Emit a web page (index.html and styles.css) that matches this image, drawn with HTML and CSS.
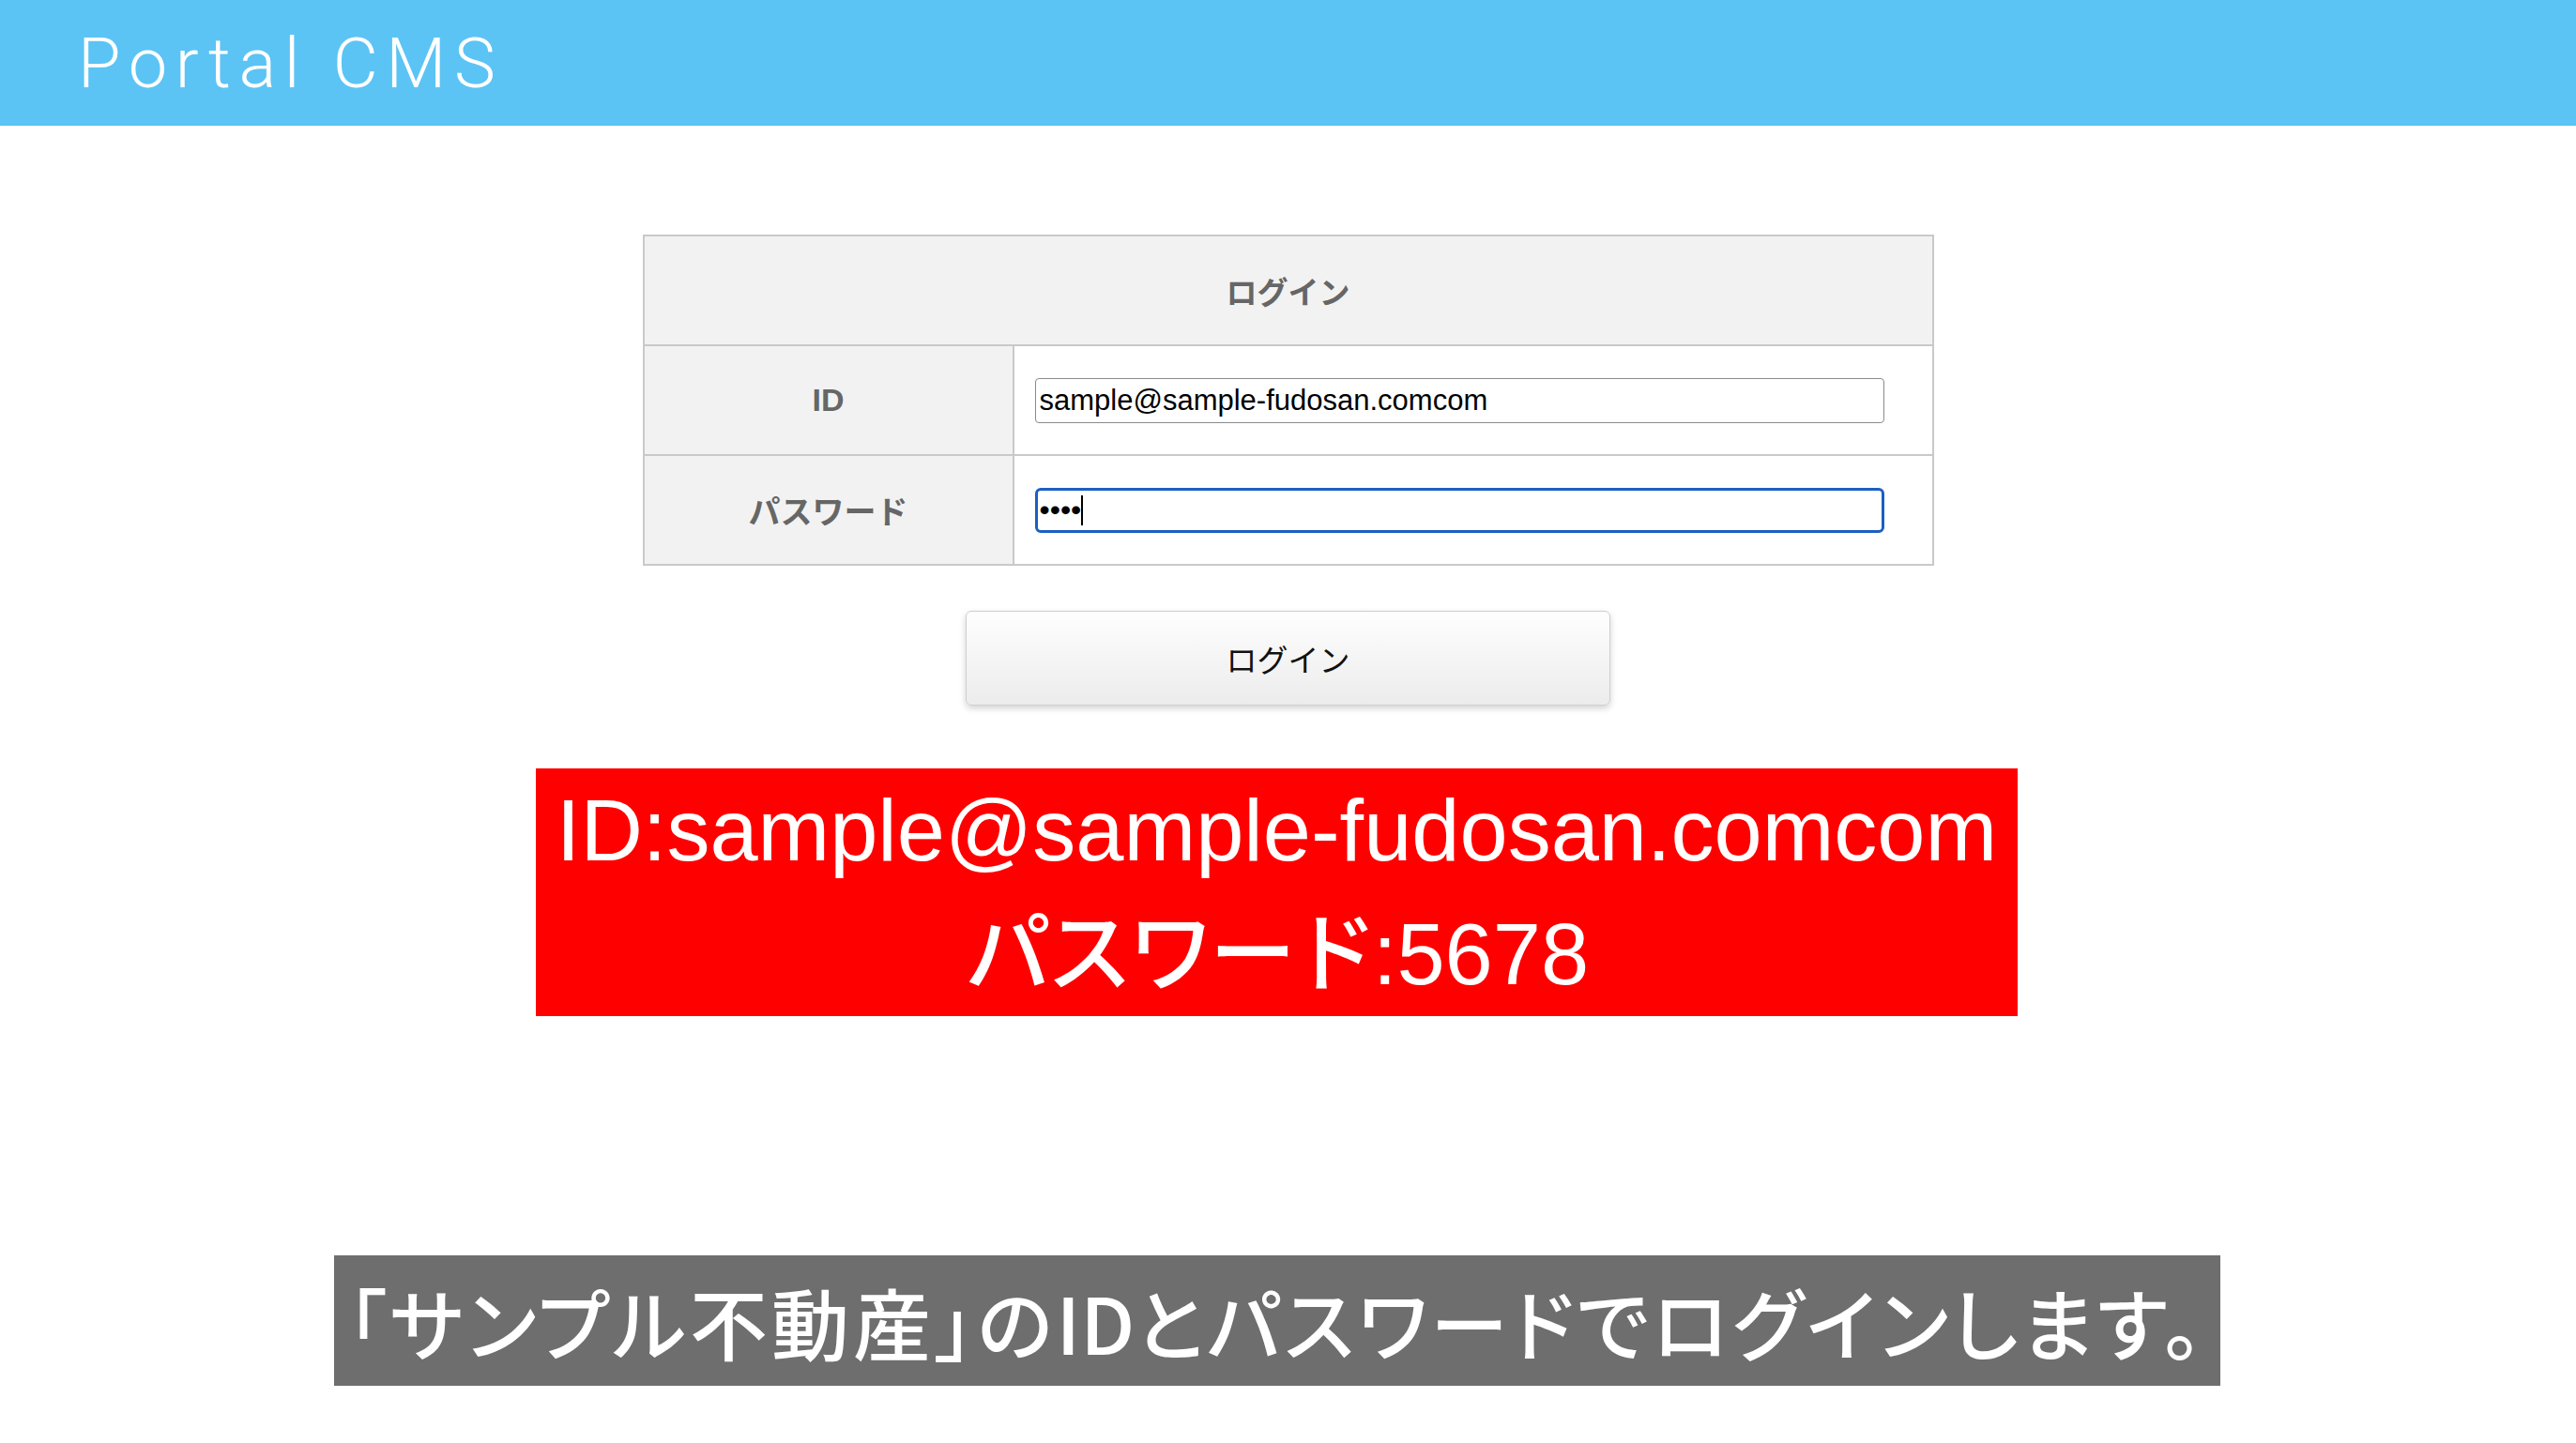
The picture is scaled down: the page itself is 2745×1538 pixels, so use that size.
FILE: index.html
```html
<!DOCTYPE html>
<html lang="ja">
<head>
  <meta charset="UTF-8">
  <meta name="viewport" content="width=device-width, initial-scale=1.0">
  <title>Portal CMS</title>
  <link rel="stylesheet" href="styles.css">
</head>
<body>
  <header class="site-header">
    <h1>Portal CMS</h1>
  </header>
  <main class="login">
    <form class="login-form" onsubmit="return false;">
      <table class="login-table">
        <colgroup>
          <col class="col-label">
          <col class="col-field">
        </colgroup>
        <tr>
          <th colspan="2" class="login-title">ログイン</th>
        </tr>
        <tr>
          <th class="label">ID</th>
          <td class="field"><input type="text" class="text-input" value="sample@sample-fudosan.comcom"></td>
        </tr>
        <tr>
          <th class="label">パスワード</th>
          <td class="field">
            <div class="text-input is-focused">
              <span class="dots">••••</span><span class="caret"></span>
            </div>
          </td>
        </tr>
      </table>
      <div class="login-actions">
        <button type="submit" class="login-button">ログイン</button>
      </div>
    </form>
  </main>
  <section class="notes">
    <div class="note-red">
      <p>ID:sample@sample-fudosan.comcom</p>
      <p><span class="kana">パスワード</span>:5678</p>
    </div>
    <div class="note-caption">
      <p>「サンプル不動産」の<span class="latin">ID</span>とパスワードでログインします。</p>
    </div>
  </section>
</body>
</html>
```

FILE: styles.css
```css
body {
  font-family: "Liberation Sans", "Noto Sans CJK JP", sans-serif;
  margin: 0;
  padding: 0;
  background-color: #ffffff;
  color: #111;
}
.site-header {
  background-color: #5bc4f4;
  height: 134px;
  display: flex;
  align-items: center;
  padding-left: 83px;
}
.site-header h1 {
  margin: 0;
  font-family: Roboto, "Liberation Sans", sans-serif;
  font-weight: 300;
  font-size: 74px;
  letter-spacing: 8.6px;
  color: #ffffff;
}
.login {
  display: flex;
  justify-content: center;
  padding-top: 116px;
}
.login-form {
  display: flex;
  flex-direction: column;
  align-items: center;
}
.login-table {
  width: 1376px;
  border-collapse: collapse;
  table-layout: fixed;
  border: 2px solid #c9c9c9;
}
.col-label {
  width: 394px;
}
.login-table th,
.login-table td {
  border: 2px solid #c9c9c9;
  height: 115px;
  padding: 0;
}
.login-title {
  background-color: #f2f2f2;
  color: #666;
  font-size: 33px;
  font-weight: 700;
}
.label {
  background-color: #f2f2f2;
  color: #666;
  font-size: 34px;
  font-weight: 700;
}
.field {
  background-color: #ffffff;
  padding-left: 22px !important;
}
.text-input {
  box-sizing: border-box;
  width: 905px;
  height: 48px;
  padding: 0 4px;
  font-family: "Liberation Sans", sans-serif;
  font-size: 31px;
  color: #000;
  border: 1.5px solid #8a8a8a;
  border-radius: 4px;
  background: #fff;
  outline: none;
}
.text-input.is-focused {
  display: flex;
  align-items: center;
  border: 3px solid #1b5fc1;
  border-radius: 6px;
  padding-left: 2px;
}
.dots {
  font-size: 32px;
  letter-spacing: 0;
}
.caret {
  width: 2px;
  height: 32px;
  background-color: #000;
}
.login-actions {
  margin-top: 48px;
}
.login-button {
  width: 687px;
  height: 101px;
  font-family: "Liberation Sans", "Noto Sans CJK JP", sans-serif;
  font-size: 33px;
  color: #111;
  background: linear-gradient(#fefefe, #ececec);
  border: 1.5px solid #cfcfcf;
  border-radius: 6px;
  box-shadow: 0 3px 7px rgba(0, 0, 0, 0.18);
  cursor: pointer;
}
.notes {
  display: flex;
  flex-direction: column;
  align-items: center;
  padding-right: 24px;
  margin-top: 67px;
}
.note-red {
  width: 1579px;
  height: 264px;
  background-color: #ff0000;
  color: #ffffff;
  text-align: center;
  font-size: 92px;
  font-weight: 500;
}
.note-red p {
  margin: 0;
  line-height: 132px;
}
.note-red .kana {
  letter-spacing: -5px;
}
.note-caption {
  width: 2010px;
  height: 139px;
  margin-top: 255px;
  background-color: #6e6e6e;
  color: #ffffff;
  display: flex;
  align-items: center;
  justify-content: center;
}
.note-caption p {
  margin: 0;
  font-family: "Noto Sans CJK JP", sans-serif;
  font-size: 83px;
  font-weight: 500;
  font-feature-settings: "palt";
  letter-spacing: 4px;
  white-space: nowrap;
}
.note-caption .latin {
  letter-spacing: 0;
}
```
